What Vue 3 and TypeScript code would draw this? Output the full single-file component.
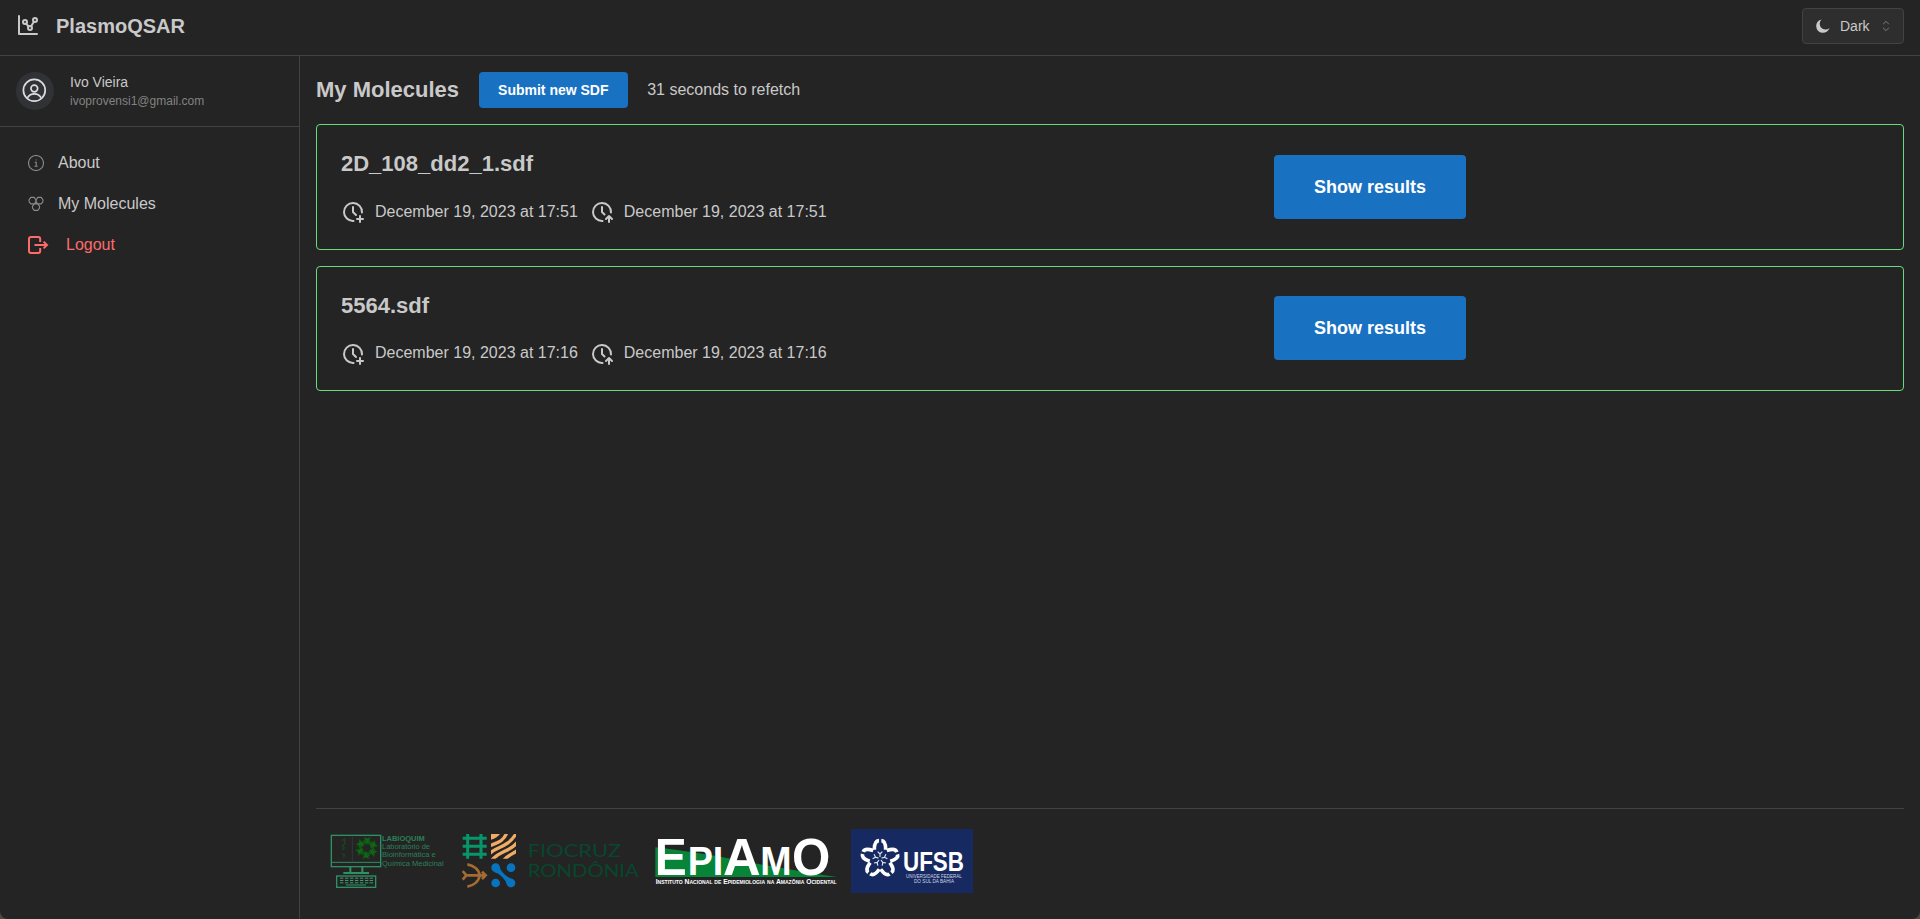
<script setup lang="ts">
interface Submission {
  name: string
  created: string
  updated: string
}

const submissions: Submission[] = [
  { name: '2D_108_dd2_1.sdf', created: 'December 19, 2023 at 17:51', updated: 'December 19, 2023 at 17:51' },
  { name: '5564.sdf', created: 'December 19, 2023 at 17:16', updated: 'December 19, 2023 at 17:16' },
]

const keyColumns: number[] = [60, 75, 90, 105, 120, 135, 149]
const keyRows: number[] = [173, 180, 187]
const petals: number[] = [0, 72, 144, 216, 288]
const leaves: number[] = [0, 60, 120, 180, 240, 300]
</script>

<template>
  <div class="shell">
    <header class="topbar">
      <div class="brand">
        <svg class="icon24" viewBox="0 0 24 24">
          <path d="M3 3v18h18" />
          <circle cx="9" cy="9" r="2" />
          <circle cx="19" cy="7" r="2" />
          <circle cx="14" cy="15" r="2" />
          <path d="M10.16 10.62l2.34 2.88M15.088 13.328l2.837-4.586" />
        </svg>
        <h1>PlasmoQSAR</h1>
      </div>
      <button class="scheme">
        <svg class="moon" viewBox="0 0 14 14">
          <path d="M5.6.4A6.8 6.8 0 1 0 13.5 9 5.2 5.2 0 0 1 5.6.4z" />
        </svg>
        <span>Dark</span>
        <svg class="chevrons" viewBox="0 0 15 15">
          <path d="M4.4 5.6 7.5 2.5l3.1 3.1M4.4 9.4l3.1 3.1 3.1-3.1" />
        </svg>
      </button>
    </header>

    <div class="body">
      <aside class="sidebar">
        <div class="user">
          <div class="avatar">
            <svg viewBox="0 0 15 15">
              <circle cx="7.5" cy="7.5" r="6.15" />
              <circle cx="7.5" cy="6.5" r="1.88" />
              <path d="M3.65 11.7a4.5 4.5 0 0 1 7.7 0" />
            </svg>
          </div>
          <div class="who">
            <div class="name">Ivo Vieira</div>
            <div class="mail">ivoprovensi1@gmail.com</div>
          </div>
        </div>
        <nav>
          <a class="link">
            <svg class="icon16" viewBox="0 0 16 16">
              <circle cx="8" cy="8" r="7.5" />
              <path d="M6.7 7.2h1.5v3.9M6.5 11.2h3.2M7.8 4.9h.8" />
            </svg>
            <span>About</span>
          </a>
          <a class="link">
            <svg class="icon16" viewBox="0 0 16 16">
              <path d="M2.8 1.4h3.4L7.8 3.6v2.2L6.4 7.9H2.8L1.1 5.8V3.6zM9.8 1.4h3.4l1.7 2.2v2.2l-1.7 2.1H9.6L8.2 5.8V3.6zM6.4 7.9h3.2l1.9 2.2v2l-1.7 2.3H6.2l-1.7-2.3v-2z" />
            </svg>
            <span>My Molecules</span>
          </a>
          <a class="link logout">
            <svg class="exit" viewBox="0 0 21 18">
              <path d="M12.2 6V3a2 2 0 0 0-2-2H3a2 2 0 0 0-2 2v12a2 2 0 0 0 2 2h7.2a2 2 0 0 0 2-2v-3M6.5 9h12.5M15.6 5.6 19 9l-3.4 3.4" />
            </svg>
            <span>Logout</span>
          </a>
        </nav>
      </aside>

      <main>
        <div class="heading">
          <h2>My Molecules</h2>
          <button class="submit">Submit new SDF</button>
          <span>31 seconds to refetch</span>
        </div>

        <section v-for="item in submissions" :key="item.name" class="card">
          <div class="details">
            <h3>{{ item.name }}</h3>
            <div class="dates">
              <svg class="icon24" viewBox="0 0 24 24">
                <path d="M20.984 12.535a9 9 0 1 0-8.468 8.45M16 19h6M19 16v6M12 7v5l3 3" />
              </svg>
              <span>{{ item.created }}</span>
              <svg class="icon24 second" viewBox="0 0 24 24">
                <path d="M20.983 12.548a9 9 0 1 0-8.45 8.436M19 22v-6M22 19l-3-3-3 3M12 7v5l2.5 2.5" />
              </svg>
              <span>{{ item.updated }}</span>
            </div>
          </div>
          <button class="results">Show results</button>
        </section>

        <footer>
          <svg class="logo lab" viewBox="0 0 390 240">
            <g fill="none" stroke="#2f9163" stroke-width="4">
              <rect x="34" y="46" width="148" height="94" />
              <path d="M34 127h148" stroke-width="3" />
              <path d="M91 141v16M127 141v16" stroke-width="6" />
              <path d="M70 159h77" stroke-width="6" />
              <rect x="50" y="168" width="117" height="34" />
              <path d="M78 195h60" stroke-width="5" opacity=".65" />
            </g>
            <path d="M97 50v74" stroke="#2b4a3a" stroke-width="2" />
            <path d="M66 62l8-5v14l-7 6 6 6-5 7M65 101l9 5-4 7" fill="none" stroke="#1d4325" stroke-width="4" />
            <g v-for="angle in leaves" :key="angle" :transform="`rotate(${angle} 140 84)`" fill="#0e5914">
              <path d="M131 50l11 5 10-4-3 13 6 3-10 7-12-4-3-10 5-2z" />
              <path d="M137 59l8 1M139 67l6-3" stroke="#1b811e" stroke-width="2" />
            </g>
            <template v-for="y in keyRows" :key="y">
              <rect v-for="x in keyColumns" :key="x" :x="x" :y="y" width="10" height="3" fill="#37a071" />
            </template>
            <g class="arial" fill="#2b8058" font-size="22.5">
              <text x="186" y="62" textLength="128" lengthAdjust="spacingAndGlyphs" font-weight="bold">LABIOQUIM</text>
              <text x="186" y="87" textLength="144" lengthAdjust="spacingAndGlyphs">Laboratório de</text>
              <text x="186" y="112" textLength="161" lengthAdjust="spacingAndGlyphs">Bioinformática e</text>
              <text x="186" y="137" textLength="185" lengthAdjust="spacingAndGlyphs">Química Medicinal</text>
            </g>
          </svg>

          <svg class="logo fio" viewBox="0 0 585 240">
            <path d="M53 42v74M93 42v74M38 55h72M38 79h72M38 103h72" stroke="#069669" stroke-width="9" fill="none" />
            <svg x="123" y="42" width="75" height="74" viewBox="0 0 75 74">
              <path d="M0 0h27Q18 12 0 17z" fill="#f0ab66" />
              <path d="M-5 36C16 26 36 26 48-5M-6 60C20 34 48 44 76-2M-2 84C26 46 54 58 82 22M34 84C48 64 62 62 82 48" fill="none" stroke="#f0ab66" stroke-width="10" />
            </svg>
            <g fill="none" stroke="#a46b32" stroke-width="8">
              <path d="M52 133c19 3 35 15 37 33-2 18-18 31-37 34M45 166h64M38 153l11 13-11 13M96 155l11 11-11 11" />
            </g>
            <g fill="#0874bf">
              <circle cx="137" cy="143" r="13" />
              <circle cx="183" cy="143" r="13" />
              <circle cx="137" cy="189" r="13" />
              <circle cx="183" cy="189" r="13" />
              <path d="M149 139q2 14 16 25 10 9 23 13l-16 20q-4-16-16-27-10-10-25-15z" />
            </g>
            <g class="wide" fill="#08462f" font-size="49">
              <text x="233" y="110" textLength="281" lengthAdjust="spacingAndGlyphs">FIOCRUZ</text>
              <text x="233" y="171" textLength="333" lengthAdjust="spacingAndGlyphs">RONDÔNIA</text>
            </g>
          </svg>

          <svg class="logo epi" viewBox="0 0 585 240">
            <path d="M31 82C190 98 380 144 576 171H31z" fill="#078437" />
            <g class="arial" fill="#fff" font-weight="bold">
              <text x="29" y="165" font-size="156" textLength="96" lengthAdjust="spacingAndGlyphs">E</text>
              <text x="128" y="165" font-size="120" textLength="107" lengthAdjust="spacingAndGlyphs">PI</text>
              <text x="234" y="165" font-size="156" textLength="113" lengthAdjust="spacingAndGlyphs">A</text>
              <text x="346" y="165" font-size="120" textLength="94" lengthAdjust="spacingAndGlyphs">M</text>
              <text x="441" y="165" font-size="156" textLength="115" lengthAdjust="spacingAndGlyphs">O</text>
              <text class="caps" x="32" y="193" font-size="20" textLength="543" lengthAdjust="spacingAndGlyphs">Instituto Nacional de Epidemiologia na Amazônia Ocidental</text>
            </g>
          </svg>

          <svg class="logo ufsb" viewBox="0 0 450 240">
            <rect x="33" y="27" width="366" height="192" fill="#172961" />
            <g v-for="angle in petals" :key="angle" :transform="`rotate(${angle} 120 116)`">
              <path d="M103 89C103 72 106 62 117 62M137 89C137 72 134 62 124 62" fill="none" stroke="#fff" stroke-width="11" />
              <path d="M120 111v-9l-7-7M120 102l7-7" fill="none" stroke="#dce3f3" stroke-width="3.5" />
            </g>
            <g class="arial" fill="#fff" font-weight="bold">
              <text x="189" y="152" font-size="85" textLength="183" lengthAdjust="spacingAndGlyphs">UFSB</text>
              <g font-size="14" font-weight="normal" fill="#d0d6e6">
                <text x="198" y="173" textLength="167" lengthAdjust="spacingAndGlyphs">UNIVERSIDADE FEDERAL</text>
                <text x="222" y="189" textLength="120" lengthAdjust="spacingAndGlyphs">DO SUL DA BAHIA</text>
              </g>
            </g>
          </svg>
        </footer>
      </main>
    </div>
  </div>
</template>

<style>
html {
  background: #51473f;
}
body {
  margin: 0;
}
</style>

<style scoped>
.shell {
  height: 100vh;
  display: flex;
  flex-direction: column;
  overflow: hidden;
  border-radius: 0 0 8px 8px;
  background: #242424;
  color: #c9c9c9;
  font: 16px/1.55 "Liberation Sans", Arial, sans-serif;
}
* {
  box-sizing: border-box;
}
h1,
h2,
h3 {
  margin: 0;
  font-weight: 700;
}
button {
  font-family: inherit;
  border: 0;
  border-radius: 4px;
}
svg {
  display: block;
  flex-shrink: 0;
}
.icon24 {
  width: 24px;
  height: 24px;
  fill: none;
  stroke: currentColor;
  stroke-width: 2;
  stroke-linecap: round;
  stroke-linejoin: round;
}
.topbar {
  flex: 0 0 56px;
  display: flex;
  align-items: center;
  justify-content: space-between;
  padding: 0 16px;
  border-bottom: 1px solid #424242;
}
.brand {
  display: flex;
  align-items: center;
  gap: 16px;
}
.brand .icon24 {
  margin-top: -5px;
}
.brand h1 {
  font-size: 20px;
  line-height: 28px;
  margin-top: -4px;
}
.scheme {
  width: 102px;
  height: 36px;
  display: flex;
  align-items: center;
  padding: 0 0 0 13px;
  margin-top: -3px;
  border: 1px solid #424242;
  background: #2e2e2e;
  color: #c9c9c9;
  font-size: 14px;
}
.moon {
  width: 14px;
  height: 14px;
  margin-right: 10px;
  fill: currentColor;
}
.chevrons {
  width: 14px;
  height: 14px;
  margin-left: 9px;
  fill: none;
  stroke: #828282;
}
.body {
  flex: 1;
  min-height: 0;
  display: flex;
}
.sidebar {
  width: 300px;
  border-right: 1px solid #424242;
}
.user {
  height: 71px;
  display: flex;
  align-items: center;
  gap: 16px;
  padding: 0 16px;
  border-bottom: 1px solid #424242;
}
.avatar {
  width: 38px;
  height: 38px;
  display: grid;
  place-items: center;
  border-radius: 50%;
  background: #313235;
}
.avatar svg {
  width: 26.6px;
  height: 26.6px;
  margin: -1px 0 0 -1px;
  fill: none;
  stroke: #dcdde0;
  stroke-width: 0.95;
}
.name {
  font-size: 14px;
  line-height: 20px;
}
.mail {
  font-size: 12px;
  line-height: 18px;
  color: #828282;
}
nav {
  padding-top: 15px;
}
.link {
  height: 41px;
  display: flex;
  align-items: center;
  padding-left: 28px;
}
.link span {
  margin-top: 2px;
}
.icon16 {
  width: 16px;
  height: 16px;
  margin-right: 14px;
  fill: none;
  stroke: #8a8a8a;
  stroke-width: 1.1;
}
.logout {
  color: #ff6b6b;
}
.exit {
  width: 21px;
  height: 18px;
  margin: 1px 17px 0 0;
  fill: none;
  stroke: currentColor;
  stroke-width: 2;
}
main {
  flex: 1;
  display: flex;
  flex-direction: column;
  padding: 16px 16px 0;
}
.heading {
  height: 36px;
  display: flex;
  align-items: center;
  margin-bottom: 16px;
}
.heading h2 {
  width: 163px;
  font-size: 22px;
  line-height: 30px;
}
.submit {
  width: 148.6px;
  height: 36px;
  margin-right: 19.6px;
  background: #1971c2;
  color: #fff;
  font-size: 14px;
  font-weight: 700;
  padding: 0;
}
.card {
  height: 125.6px;
  display: grid;
  grid-template-columns: 933px 192px;
  align-items: center;
  padding: 0 24px;
  margin-bottom: 16px;
  border: 1px solid #69db7c;
  border-radius: 4px;
}
h3 {
  font-size: 22px;
  line-height: 29.7px;
}
.dates {
  display: flex;
  align-items: center;
  gap: 10px;
  height: 24px;
  margin-top: 21.5px;
}
.dates span {
  line-height: 24px;
  margin-top: -1.3px;
}
.dates .second {
  margin-left: 2px;
}
.results {
  height: 64px;
  padding: 0.8px 0 0;
  background: #1971c2;
  color: #fff;
  font-size: 18px;
  font-weight: 700;
}
footer {
  display: flex;
  margin-top: auto;
  height: 111px;
  padding: 11px 4px 0;
  border-top: 1px solid #424242;
}
.logo {
  height: 80px;
}
.lab {
  width: 130px;
}
.fio,
.epi {
  width: 195px;
}
.ufsb {
  width: 150px;
}
.arial {
  font-family: "Liberation Sans", Arial, sans-serif;
}
.wide {
  font-family: Lato, sans-serif;
}
.caps {
  font-variant: small-caps;
}
</style>
